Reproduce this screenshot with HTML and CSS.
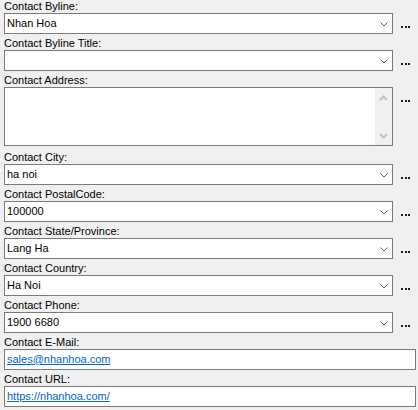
FILE: index.html
```html
<!DOCTYPE html>
<html>
<head>
<meta charset="utf-8">
<link rel="stylesheet" href="styles.css">
</head>
<body>
<div class="form">
  <div class="row">
    <div class="lbl">Contact Byline:</div>
    <div class="line">
      <div class="combo"><span class="val">Nhan Hoa</span><svg class="chev" width="8" height="5" viewBox="0 0 8 5"><polyline points="0.5,0.5 4,4 7.5,0.5" fill="none" stroke="#5a5a5a" stroke-width="1"/></svg></div>
      <span class="more"><i></i><i></i><i></i></span>
    </div>
  </div>
  <div class="row">
    <div class="lbl">Contact Byline Title:</div>
    <div class="line">
      <div class="combo"><span class="val"></span><svg class="chev" width="8" height="5" viewBox="0 0 8 5"><polyline points="0.5,0.5 4,4 7.5,0.5" fill="none" stroke="#5a5a5a" stroke-width="1"/></svg></div>
      <span class="more"><i></i><i></i><i></i></span>
    </div>
  </div>
  <div class="row row-area">
    <div class="lbl">Contact Address:</div>
    <div class="line">
      <div class="area">
        <div class="area-text"></div>
        <div class="sbar">
          <svg width="9" height="6" viewBox="0 0 9 6"><polyline points="1,5 4.5,1.5 8,5" fill="none" stroke="#c2c2c2" stroke-width="2"/></svg>
          <svg width="9" height="6" viewBox="0 0 9 6"><polyline points="1,1 4.5,4.5 8,1" fill="none" stroke="#c2c2c2" stroke-width="2"/></svg>
        </div>
      </div>
      <span class="more"><i></i><i></i><i></i></span>
    </div>
  </div>
  <div class="row">
    <div class="lbl">Contact City:</div>
    <div class="line">
      <div class="combo"><span class="val">ha noi</span><svg class="chev" width="8" height="5" viewBox="0 0 8 5"><polyline points="0.5,0.5 4,4 7.5,0.5" fill="none" stroke="#5a5a5a" stroke-width="1"/></svg></div>
      <span class="more"><i></i><i></i><i></i></span>
    </div>
  </div>
  <div class="row">
    <div class="lbl">Contact PostalCode:</div>
    <div class="line">
      <div class="combo"><span class="val">100000</span><svg class="chev" width="8" height="5" viewBox="0 0 8 5"><polyline points="0.5,0.5 4,4 7.5,0.5" fill="none" stroke="#5a5a5a" stroke-width="1"/></svg></div>
      <span class="more"><i></i><i></i><i></i></span>
    </div>
  </div>
  <div class="row">
    <div class="lbl">Contact State/Province:</div>
    <div class="line">
      <div class="combo"><span class="val">Lang Ha</span><svg class="chev" width="8" height="5" viewBox="0 0 8 5"><polyline points="0.5,0.5 4,4 7.5,0.5" fill="none" stroke="#5a5a5a" stroke-width="1"/></svg></div>
      <span class="more"><i></i><i></i><i></i></span>
    </div>
  </div>
  <div class="row">
    <div class="lbl">Contact Country:</div>
    <div class="line">
      <div class="combo"><span class="val">Ha Noi</span><svg class="chev" width="8" height="5" viewBox="0 0 8 5"><polyline points="0.5,0.5 4,4 7.5,0.5" fill="none" stroke="#5a5a5a" stroke-width="1"/></svg></div>
      <span class="more"><i></i><i></i><i></i></span>
    </div>
  </div>
  <div class="row">
    <div class="lbl">Contact Phone:</div>
    <div class="line">
      <div class="combo"><span class="val">1900 6680</span><svg class="chev" width="8" height="5" viewBox="0 0 8 5"><polyline points="0.5,0.5 4,4 7.5,0.5" fill="none" stroke="#5a5a5a" stroke-width="1"/></svg></div>
      <span class="more"><i></i><i></i><i></i></span>
    </div>
  </div>
  <div class="row">
    <div class="lbl">Contact E-Mail:</div>
    <div class="line">
      <div class="text"><a class="link" href="#">sales@nhanhoa.com</a></div>
    </div>
  </div>
  <div class="row">
    <div class="lbl">Contact URL:</div>
    <div class="line">
      <div class="text"><a class="link" href="#">https://nhanhoa.com/</a></div>
    </div>
  </div>
</div>
</body>
</html>
```

FILE: styles.css
```css
html, body {
  margin: 0;
  padding: 0;
  background: #f0f0f0;
}
body {
  font-family: "Liberation Sans", Arial, sans-serif;
  font-size: 11px;
  color: #000;
}
.form {
  display: flex;
  flex-direction: column;
  padding: 0 0 0 4px;
  width: 414px;
}
.row {
  display: flex;
  flex-direction: column;
  margin-bottom: 3px;
}
.row-area {
  margin-bottom: 5px;
}
.lbl {
  height: 13px;
  line-height: 13px;
  white-space: nowrap;
}
.line {
  display: flex;
  align-items: flex-start;
}
.combo {
  box-sizing: border-box;
  width: 389px;
  height: 21px;
  border: 1px solid #7a7a7a;
  background: #fff;
  display: flex;
  align-items: center;
  justify-content: space-between;
  padding: 0 4px 0 2px;
}
.val {
  line-height: 13px;
}
.chev {
  display: block;
  margin-top: 1px;
}
.more {
  width: 25px;
  display: flex;
  justify-content: center;
  gap: 1.5px;
  margin-top: 13px;
}
.more i {
  display: block;
  width: 2px;
  height: 2px;
  background: #1e1e1e;
}
.area {
  box-sizing: border-box;
  width: 389px;
  height: 59px;
  border: 1px solid #7a7a7a;
  background: #fff;
  display: flex;
}
.area-text {
  flex: 1;
}
.sbar {
  width: 17px;
  background: #f0f0f0;
  display: flex;
  flex-direction: column;
  align-items: center;
  justify-content: space-between;
  padding: 7px 0 6px;
}
.sbar svg {
  display: block;
}
.text {
  box-sizing: border-box;
  width: 412px;
  height: 21px;
  border: 1px solid #7a7a7a;
  background: #fff;
  display: flex;
  align-items: center;
  padding: 0 2px;
}
.link {
  color: #0066cc;
  text-decoration: underline;
  line-height: 13px;
}
```
